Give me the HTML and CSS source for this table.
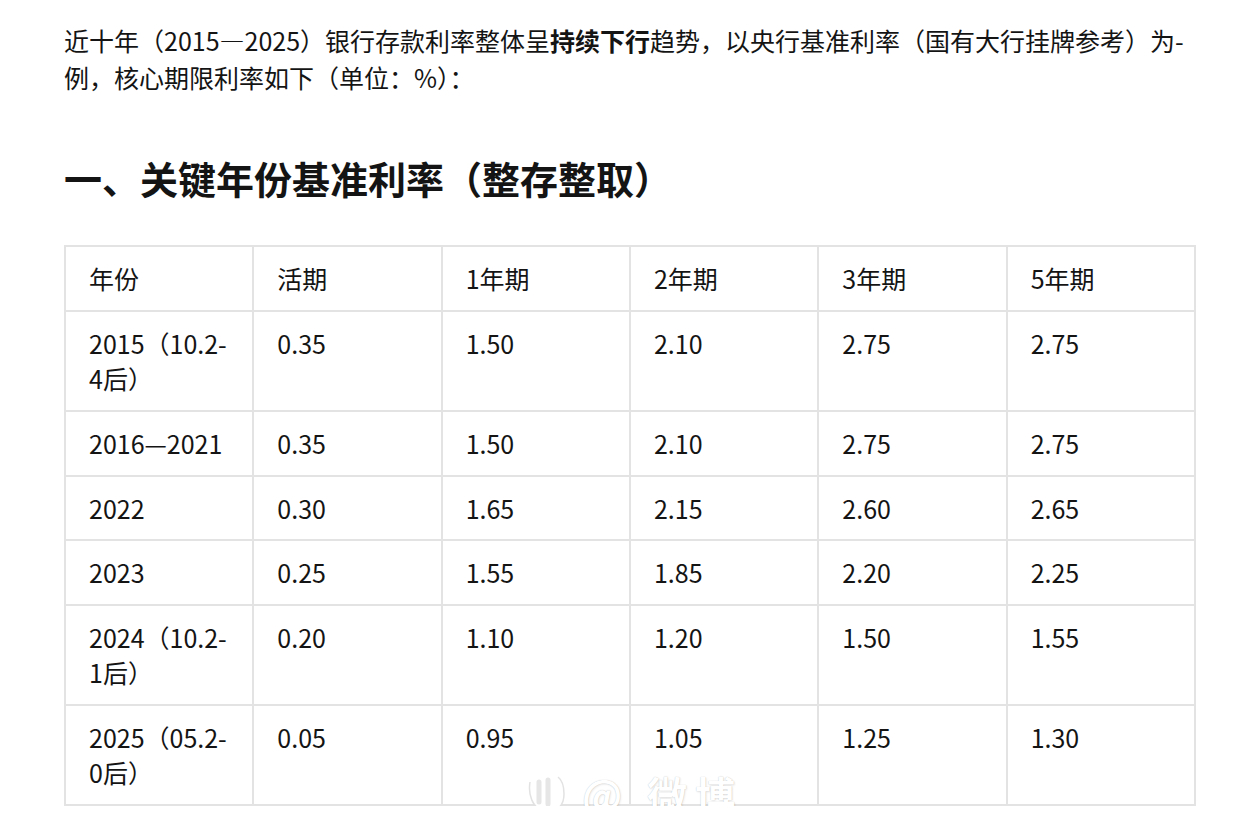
FILE: index.html
```html
<!DOCTYPE html>
<html lang="zh-CN">
<head>
<meta charset="utf-8">
<link rel="stylesheet" href="styles.css">
</head>
<body>
<main class="doc">
  <p class="intro">近十年（2015—2025）银行存款利率整体呈<strong>持续下行</strong>趋势，以央行基准利率（国有大行挂牌参考）为-<br>例，核心期限利率如下（单位：%）：</p>
  <h2 class="title">一、关键年份基准利率（整存整取）</h2>
  <div class="table-wrap">
    <table class="rates">
      <thead>
        <tr><th>年份</th><th>活期</th><th>1年期</th><th>2年期</th><th>3年期</th><th>5年期</th></tr>
      </thead>
      <tbody>
        <tr><td>2015（10.2-<br>4后）</td><td>0.35</td><td>1.50</td><td>2.10</td><td>2.75</td><td>2.75</td></tr>
        <tr><td>2016—2021</td><td>0.35</td><td>1.50</td><td>2.10</td><td>2.75</td><td>2.75</td></tr>
        <tr><td>2022</td><td>0.30</td><td>1.65</td><td>2.15</td><td>2.60</td><td>2.65</td></tr>
        <tr><td>2023</td><td>0.25</td><td>1.55</td><td>1.85</td><td>2.20</td><td>2.25</td></tr>
        <tr><td>2024（10.2-<br>1后）</td><td>0.20</td><td>1.10</td><td>1.20</td><td>1.50</td><td>1.55</td></tr>
        <tr><td>2025（05.2-<br>0后）</td><td>0.05</td><td>0.95</td><td>1.05</td><td>1.25</td><td>1.30</td></tr>
      </tbody>
    </table>
    <div class="watermark" aria-hidden="true">
      <svg width="44" height="44" viewBox="0 0 44 44"><path d="M6 10 C4 22 8 36 20 39 C32 42 40 34 40 22 C40 14 38 8 34 5" fill="#ffffff" stroke="#e2e2e2" stroke-width="1.5"/><path d="M15 10 L15 30 M24 8 L24 32" stroke="#e6e6e6" stroke-width="5" stroke-linecap="round"/></svg>
      <span class="wm-text">@ 微博</span>
    </div>
  </div>
</main>
</body>
</html>
```

FILE: styles.css
```css
html, body {
  margin: 0;
  padding: 0;
  background: #ffffff;
}
body {
  font-family: "Noto Sans CJK SC", "Noto Sans", sans-serif;
  color: #141414;
}
.doc {
  padding: 22px 64px 0 64px;
  width: 1132px;
}
.intro {
  margin: 0;
  font-size: 25px;
  line-height: 37px;
}
.intro strong {
  font-weight: 700;
}
.title {
  margin: 56px 0 0 0;
  font-size: 38px;
  line-height: 52px;
  font-weight: 700;
}
.table-wrap {
  position: relative;
  margin-top: 41px;
}
.rates {
  width: 1132px;
  border-collapse: collapse;
  table-layout: fixed;
  font-size: 25px;
  line-height: 35.25px;
}
.rates th, .rates td {
  border: 2px solid #e3e3e3;
  padding: 14px 23px 13.5px 23px;
  text-align: left;
  vertical-align: top;
  font-weight: 400;
}
.watermark {
  position: absolute;
  left: 460px;
  top: 520px;
  display: flex;
  align-items: center;
  gap: 14px;
}
.wm-text {
  font-size: 40px;
  font-weight: 700;
  color: #ffffff;
  letter-spacing: 8px;
  text-shadow: 0 0 1px rgba(0, 0, 0, 0.25), 1px 1px 2px rgba(0, 0, 0, 0.08);
}
```
